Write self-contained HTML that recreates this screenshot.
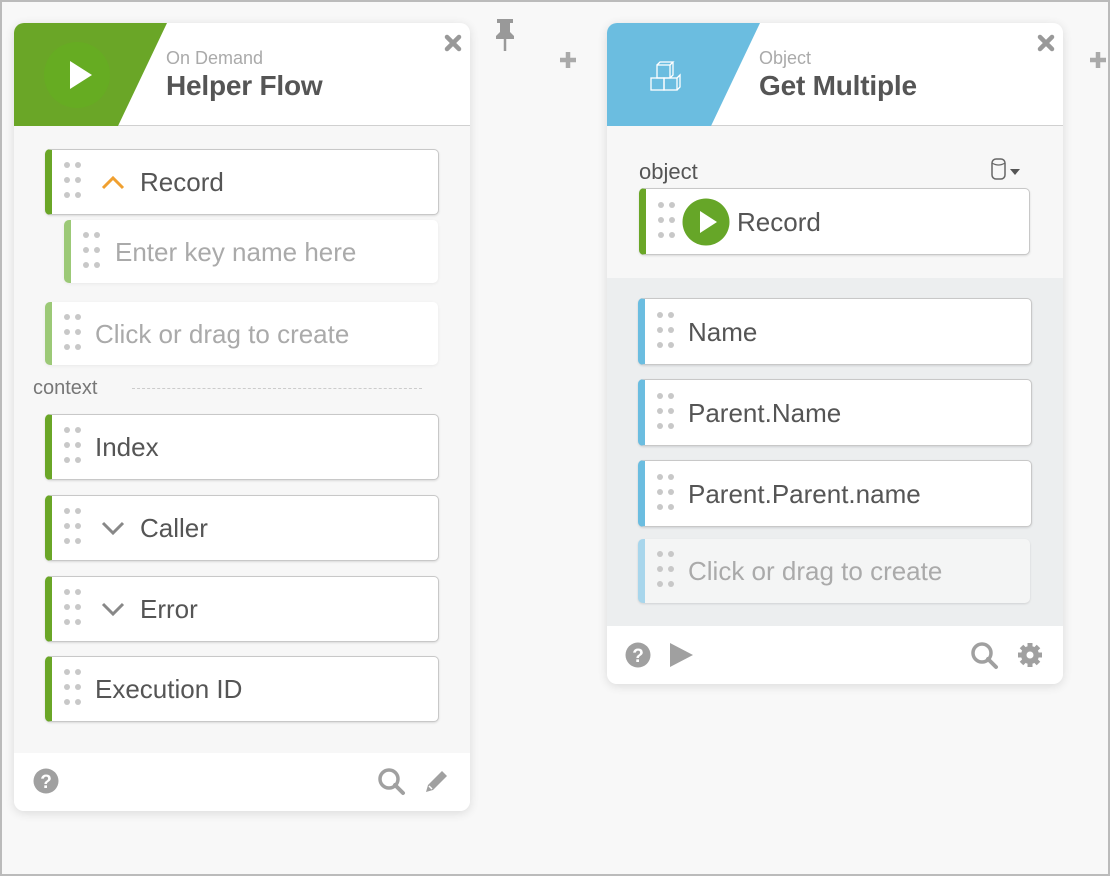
<!DOCTYPE html>
<html><head><meta charset="utf-8"><style>
*{box-sizing:border-box;margin:0;padding:0}
body{width:1110px;height:876px;background:#f8f8f8;font-family:"Liberation Sans",sans-serif;position:relative;overflow:hidden}
.frame{position:absolute;left:0;top:0;width:1110px;height:876px;border:2px solid #bbb;pointer-events:none;z-index:5}
.a{position:absolute}
.card{position:absolute;background:#f7f7f7;border-radius:10px;box-shadow:0 2px 10px rgba(0,0,0,.12);overflow:hidden}
.hdr{position:absolute;left:0;top:0;right:0;height:103px;background:#fff;border-bottom:1px solid #d0d0d0}
.sub{position:absolute;font-size:18px;color:#aaa}
.ttl{position:absolute;font-size:28px;color:#555;font-weight:bold;letter-spacing:-.2px}
.row{position:absolute;background:#fff;border:1px solid #c8c8c8;border-left:7px solid #6aa627;border-radius:5px;box-shadow:0 1px 2px rgba(0,0,0,.12);font-size:26px;color:#555;line-height:1}
.row.ph{border:none;border-left:7px solid #9cc977;color:#aaa;box-shadow:0 1px 3px rgba(0,0,0,.06)}
.row.b{border-left-color:#6bbde0}
.row.bp{border:none;border-left:7px solid #a8d6ec;background:#f4f5f5;color:#aaa}
.row span{position:absolute;top:50%;transform:translateY(-50%);white-space:nowrap}
.dots{position:absolute;left:12px;top:50%;margin-top:-20px;width:18px;height:40px}
.dots i{position:absolute;width:6px;height:6px;border-radius:50%;background:#c8c8c8}
.foot{position:absolute;left:0;right:0;bottom:0;height:58px;background:#fff}
</style></head><body>
<div class="frame"></div>

<!-- LEFT CARD -->
<div class="card" style="left:14px;top:23px;width:456px;height:788px">
  <div class="hdr">
    <svg class="a" style="left:0;top:0" width="160" height="103"><polygon points="0,0 153,0 104,103 0,103" fill="#6aa627"/><circle cx="63" cy="52" r="33" fill="#66ac22"/><polygon points="56,38 56,66 78,52" fill="#fff"/></svg>
    <div class="sub" style="left:152px;top:25px">On Demand</div>
    <div class="ttl" style="left:152px;top:47px">Helper Flow</div>
    <svg class="a" style="left:430px;top:11px" width="18" height="18"><path d="M3 3L15 15M15 3L3 15" stroke="#999" stroke-width="4.5" stroke-linecap="round"/></svg>
  </div>
  <div class="foot">
    <svg class="a" style="left:19px;top:15px" width="26" height="26"><circle cx="13" cy="13" r="12.5" fill="#a0a0a0"/><text x="13" y="20" font-size="19" font-weight="bold" fill="#fff" text-anchor="middle" font-family="Liberation Sans">?</text></svg>
    <svg class="a" style="left:363px;top:14px" width="30" height="30"><circle cx="12" cy="12" r="9" fill="none" stroke="#a0a0a0" stroke-width="3.5"/><path d="M18 18L26 26" stroke="#a0a0a0" stroke-width="4" stroke-linecap="round"/></svg>
    <svg class="a" style="left:409px;top:14px" width="28" height="28"><path d="M3 25L5 18L19 4L24 9L10 23Z" fill="#a0a0a0"/><path d="M6 19L9 22" stroke="#fff" stroke-width="1.5"/></svg>
  </div>
</div>

<!-- RIGHT CARD -->
<div class="card" style="left:607px;top:23px;width:456px;height:661px">
  <div class="hdr">
    <svg class="a" style="left:0;top:0" width="160" height="103"><polygon points="0,0 153,0 104,103 0,103" fill="#6bbde0"/>
      <g fill="none" stroke="#fff" stroke-width="1.3"><rect x="44" y="55" width="13" height="12"/><rect x="57" y="55" width="13" height="12"/><rect x="50" y="42" width="13" height="13"/><path d="M50 42l3-3h13l-3 3M66 39v13l-3 3M70 55l3-3v12l-3 3"/></g></svg>
    <div class="sub" style="left:152px;top:25px">Object</div>
    <div class="ttl" style="left:152px;top:47px">Get Multiple</div>
    <svg class="a" style="left:430px;top:11px" width="18" height="18"><path d="M3 3L15 15M15 3L3 15" stroke="#999" stroke-width="4.5" stroke-linecap="round"/></svg>
  </div>
  <div class="a" style="left:0;top:255px;width:456px;height:348px;background:#eceeef"></div>
  <div class="a" style="left:32px;top:136px;font-size:22px;color:#555">object</div>
  <svg class="a" style="left:383px;top:134px" width="40" height="24"><rect x="2" y="2" width="13" height="20" rx="4" fill="none" stroke="#666" stroke-width="1.5"/><path d="M2 6q6.5 4 13 0" fill="none" stroke="#666" stroke-width="1.3"/><polygon points="20,12 30,12 25,18" fill="#555"/></svg>
  <div class="foot">
    <svg class="a" style="left:18px;top:16px" width="26" height="26"><circle cx="13" cy="13" r="12.5" fill="#a0a0a0"/><text x="13" y="20" font-size="19" font-weight="bold" fill="#fff" text-anchor="middle" font-family="Liberation Sans">?</text></svg>
    <svg class="a" style="left:61px;top:15px" width="26" height="28"><polygon points="2,2 2,26 25,14" fill="#a0a0a0"/></svg>
    <svg class="a" style="left:363px;top:15px" width="30" height="30"><circle cx="12" cy="12" r="9" fill="none" stroke="#a0a0a0" stroke-width="3.5"/><path d="M18 18L26 26" stroke="#a0a0a0" stroke-width="4" stroke-linecap="round"/></svg>
    <svg class="a" style="left:409px;top:15px" width="28" height="28" viewBox="0 0 28 28"><g fill="#a0a0a0"><circle cx="14" cy="14" r="9"/><g stroke="#a0a0a0" stroke-width="5"><path d="M14 2v24M2 14h24M5.5 5.5l17 17M22.5 5.5l-17 17"/></g></g><circle cx="14" cy="14" r="3.5" fill="#fff"/></svg>
  </div>
</div>

<!-- pin & plus -->
<svg class="a" style="left:492px;top:18px" width="26" height="34"><path d="M5 1h16v4h-3v9l4 4v3H4v-3l4-4V5H5z" fill="#999"/><path d="M13 21l0 12" stroke="#999" stroke-width="2.5"/></svg>
<svg class="a" style="left:557px;top:49px" width="22" height="22"><path d="M11 3v16M3 11h16" stroke="#aaa" stroke-width="4.5"/></svg>
<svg class="a" style="left:1087px;top:49px" width="22" height="22"><path d="M11 3v16M3 11h16" stroke="#aaa" stroke-width="4.5"/></svg>

<!-- context label -->
<div class="a" style="left:33px;top:377px;font-size:20px;color:#777">context</div>
<div class="a" style="left:132px;top:388px;width:290px;border-top:1px dashed #ccc"></div>

<!-- left rows -->
<div class="row" style="left:45px;top:149px;width:394px;height:66px"><div class="dots"><i style="left:0;top:0"></i><i style="left:11px;top:0"></i><i style="left:0;top:15px"></i><i style="left:11px;top:15px"></i><i style="left:0;top:30px"></i><i style="left:11px;top:30px"></i></div>
<svg class="a" style="left:48px;top:22px" width="28" height="20"><path d="M3 16L13 6L23 16" fill="none" stroke="#f0a030" stroke-width="3"/></svg><span style="left:88px">Record</span></div>

<div class="row ph" style="left:64px;top:220px;width:374px;height:63px"><div class="dots"><i style="left:0;top:0"></i><i style="left:11px;top:0"></i><i style="left:0;top:15px"></i><i style="left:11px;top:15px"></i><i style="left:0;top:30px"></i><i style="left:11px;top:30px"></i></div><span style="left:44px">Enter key name here</span></div>

<div class="row ph" style="left:45px;top:302px;width:393px;height:63px"><div class="dots"><i style="left:0;top:0"></i><i style="left:11px;top:0"></i><i style="left:0;top:15px"></i><i style="left:11px;top:15px"></i><i style="left:0;top:30px"></i><i style="left:11px;top:30px"></i></div><span style="left:43px">Click or drag to create</span></div>

<div class="row" style="left:45px;top:414px;width:394px;height:66px"><div class="dots"><i style="left:0;top:0"></i><i style="left:11px;top:0"></i><i style="left:0;top:15px"></i><i style="left:11px;top:15px"></i><i style="left:0;top:30px"></i><i style="left:11px;top:30px"></i></div><span style="left:43px">Index</span></div>

<div class="row" style="left:45px;top:495px;width:394px;height:66px"><div class="dots"><i style="left:0;top:0"></i><i style="left:11px;top:0"></i><i style="left:0;top:15px"></i><i style="left:11px;top:15px"></i><i style="left:0;top:30px"></i><i style="left:11px;top:30px"></i></div>
<svg class="a" style="left:48px;top:22px" width="28" height="20"><path d="M3 5L13 15L23 5" fill="none" stroke="#888" stroke-width="3"/></svg><span style="left:88px">Caller</span></div>

<div class="row" style="left:45px;top:576px;width:394px;height:66px"><div class="dots"><i style="left:0;top:0"></i><i style="left:11px;top:0"></i><i style="left:0;top:15px"></i><i style="left:11px;top:15px"></i><i style="left:0;top:30px"></i><i style="left:11px;top:30px"></i></div>
<svg class="a" style="left:48px;top:22px" width="28" height="20"><path d="M3 5L13 15L23 5" fill="none" stroke="#888" stroke-width="3"/></svg><span style="left:88px">Error</span></div>

<div class="row" style="left:45px;top:656px;width:394px;height:66px"><div class="dots"><i style="left:0;top:0"></i><i style="left:11px;top:0"></i><i style="left:0;top:15px"></i><i style="left:11px;top:15px"></i><i style="left:0;top:30px"></i><i style="left:11px;top:30px"></i></div><span style="left:43px">Execution ID</span></div>

<!-- right rows -->
<div class="row" style="left:639px;top:188px;width:391px;height:67px"><div class="dots"><i style="left:0;top:0"></i><i style="left:11px;top:0"></i><i style="left:0;top:15px"></i><i style="left:11px;top:15px"></i><i style="left:0;top:30px"></i><i style="left:11px;top:30px"></i></div>
<svg class="a" style="left:36px;top:9px" width="48" height="48"><circle cx="24" cy="24" r="23.5" fill="#66a628"/><polygon points="18,13 18,35 35,24" fill="#fff"/></svg><span style="left:91px">Record</span></div>

<div class="row b" style="left:638px;top:298px;width:394px;height:67px"><div class="dots"><i style="left:0;top:0"></i><i style="left:11px;top:0"></i><i style="left:0;top:15px"></i><i style="left:11px;top:15px"></i><i style="left:0;top:30px"></i><i style="left:11px;top:30px"></i></div><span style="left:43px">Name</span></div>
<div class="row b" style="left:638px;top:379px;width:394px;height:67px"><div class="dots"><i style="left:0;top:0"></i><i style="left:11px;top:0"></i><i style="left:0;top:15px"></i><i style="left:11px;top:15px"></i><i style="left:0;top:30px"></i><i style="left:11px;top:30px"></i></div><span style="left:43px">Parent.Name</span></div>
<div class="row b" style="left:638px;top:460px;width:394px;height:67px"><div class="dots"><i style="left:0;top:0"></i><i style="left:11px;top:0"></i><i style="left:0;top:15px"></i><i style="left:11px;top:15px"></i><i style="left:0;top:30px"></i><i style="left:11px;top:30px"></i></div><span style="left:43px">Parent.Parent.name</span></div>
<div class="row bp" style="left:638px;top:539px;width:392px;height:64px"><div class="dots"><i style="left:0;top:0"></i><i style="left:11px;top:0"></i><i style="left:0;top:15px"></i><i style="left:11px;top:15px"></i><i style="left:0;top:30px"></i><i style="left:11px;top:30px"></i></div><span style="left:43px">Click or drag to create</span></div>

</body></html>
